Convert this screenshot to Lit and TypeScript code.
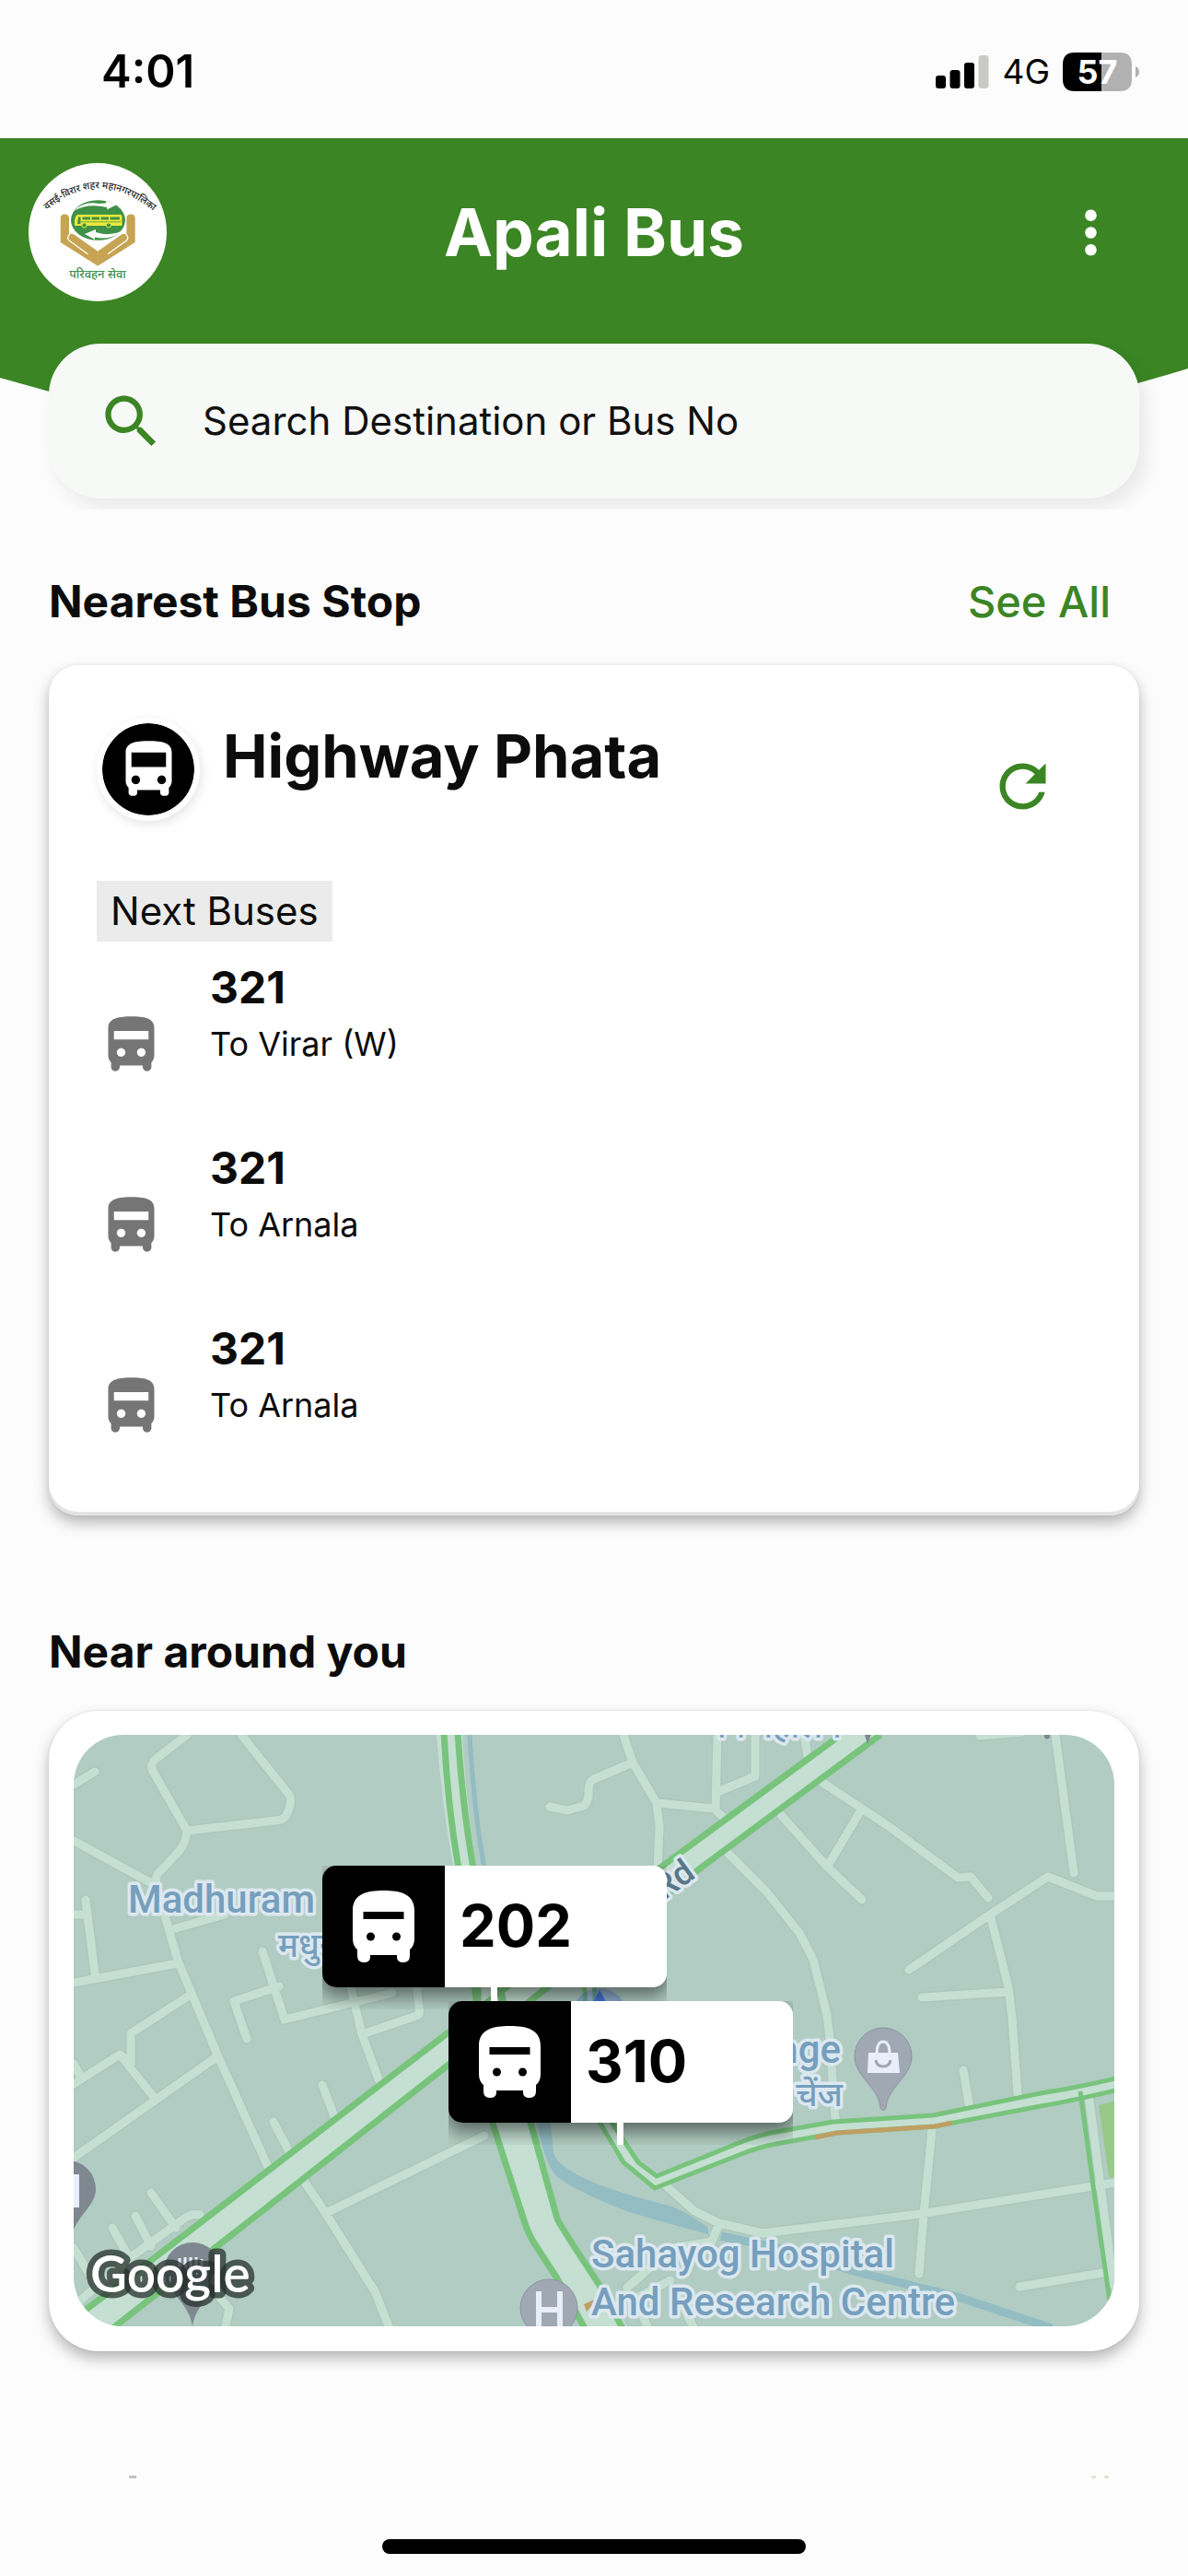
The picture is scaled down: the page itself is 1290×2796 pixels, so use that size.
import { LitElement, html, svg, css } from "lit";
import { customElement, property } from "lit/decorators.js";

const BUS_WIDE =
  "M4 16c0 .88.39 1.67 1 2.22V20c0 .55.45 1 1 1h1c.55 0 1-.45 1-1v-1h8v1c0 .55.45 1 1 1h1c.55 0 1-.45 1-1v-1.78c.61-.55 1-1.34 1-2.22V6c0-3.5-3.58-4-8-4s-8 .5-8 4v10zm3.5 1c-.83 0-1.5-.67-1.5-1.5S6.67 14 7.5 14s1.5.67 1.5 1.5S8.33 17 7.5 17zm9 0c-.83 0-1.5-.67-1.5-1.5s.67-1.5 1.5-1.5 1.5.67 1.5 1.5-.67 1.5-1.5 1.5zm1.5-6H6V6h12v5z";
const BUS_FILLED =
  "M12 2C8 2 4 2.5 4 6v9.5c0 .95.38 1.81 1 2.44v1.56c0 .83.67 1.5 1.5 1.5S8 20.33 8 19.5V19h8v.5c0 .82.67 1.5 1.5 1.5.82 0 1.5-.67 1.5-1.5v-1.56c.62-.63 1-1.49 1-2.44V6c0-3.5-3.58-4-8-4zM8.5 16c-.83 0-1.5-.67-1.5-1.5S7.67 13 8.5 13s1.5.67 1.5 1.5S9.33 16 8.5 16zm7 0c-.83 0-1.5-.67-1.5-1.5s.67-1.5 1.5-1.5 1.5.67 1.5 1.5-.67 1.5-1.5 1.5zm2.5-6H6V7h12v3z";
const SEARCH =
  "M15.5 14h-.79l-.28-.27C15.41 12.59 16 11.11 16 9.5 16 5.91 13.09 3 9.5 3S3 5.91 3 9.5 5.91 16 9.5 16c1.61 0 3.09-.59 4.23-1.57l.27.28v.79l5 4.99L20.49 19l-4.99-5zm-6 0C7.01 14 5 11.99 5 9.5S7.01 5 9.5 5 14 7.01 14 9.5 11.99 14 9.5 14z";
const REFRESH =
  "M17.65 6.35C16.2 4.9 14.21 4 12 4c-4.42 0-7.99 3.58-7.99 8s3.57 8 7.99 8c3.73 0 6.84-2.55 7.73-6h-2.08c-.82 2.33-3.04 4-5.65 4-3.31 0-6-2.69-6-6s2.69-6 6-6c1.66 0 3.14.69 4.22 1.78L13 11h7V4l-2.35 2.35z";
const MORE =
  "M12 8c1.1 0 2-.9 2-2s-.9-2-2-2-2 .9-2 2 .9 2 2 2zm0 2c-1.1 0-2 .9-2 2s.9 2 2 2 2-.9 2-2-.9-2-2-2zm0 6c-1.1 0-2 .9-2 2s.9 2 2 2 2-.9 2-2-.9-2-2-2z";

const icon = (d: string) =>
  html`<svg class="icon" viewBox="0 0 24 24" aria-hidden="true"><path fill="currentColor" d=${d}></path></svg>`;

@customElement("status-bar")
class StatusBar extends LitElement {
  static styles = css`
    :host { display: flex; align-items: center; justify-content: space-between; height: 150px; padding: 6px 52px 0 110px; box-sizing: border-box; color: #000; }
    .time { font-size: 49px; font-weight: 600; }
    .right { display: flex; align-items: center; gap: 14px; font-size: 37px; font-weight: 400; }
    .bars { width: 58px; height: 36px; }
    .battery { width: 84px; height: 42px; }
  `;
  render() {
    return html`
      <span class="time">4:01</span>
      <span class="right">
        <svg class="bars" viewBox="0 0 58 36" role="img" aria-label="Signal">
          <rect x="0" y="22" width="11" height="14" rx="3"></rect>
          <rect x="15.5" y="16" width="11" height="20" rx="3"></rect>
          <rect x="31" y="8" width="11" height="28" rx="3"></rect>
          <rect x="46.5" y="0" width="11" height="36" rx="3" fill="#c9cac8"></rect>
        </svg>
        <span>4G</span>
        <svg class="battery" viewBox="0 0 84 42" role="img" aria-label="Battery">
          <path fill="#b1b1b1" d="M42 0H62Q75 0 75 13V29Q75 42 62 42H42zM79 15q4 1.500 4 6t-4 6z"></path>
          <path d="M42 0H13Q0 0 0 13V29Q0 42 13 42H42z"></path>
          <text x="37.500" y="34" text-anchor="middle" font-size="36" font-weight="700" fill="#fff">57</text>
        </svg>
      </span>
    `;
  }
}

@customElement("transport-logo")
class TransportLogo extends LitElement {
  static styles = css`
    :host { display: block; width: 150px; height: 150px; }
    svg { display: block; width: 100%; height: 100%; }
    .hindi { font-family: "Noto Sans Devanagari", "Noto Sans", "Lohit Devanagari", "FreeSans", sans-serif; }
  `;
  render() {
    const hand = svg`
      <path fill="#c6a453" d="M34.700 60Q34.700 55.500 39.300 55.500Q44 55.500 44 60V77Q47 76 50 78L75.300 95.700V111.700L34.700 86z"></path>
      <path fill="none" stroke="#fff" stroke-width="1.300" stroke-linecap="round" d="M44.500 77.500Q41 81 44 84L64 98.500"></path>`;
    return html`
      <svg viewBox="0 0 150 150" role="img" aria-label="Parivahan Seva">
        <circle cx="75" cy="75" r="75" fill="#fff"></circle>
        <path id="arc" fill="none" d="M20 51Q75 4 134 51"></path>
        <text class="hindi" font-size="10.500" font-weight="500" fill="#222"><textPath href="#arc">वसई-विरार शहर महानगरपालिका</textPath></text>
        <ellipse cx="75.500" cy="62" rx="29.500" ry="21.800" fill="#3f9147"></ellipse>
        <path fill="#fff" d="M49 52Q60 41 76 44L84 43.500V41L96 45L85 50.500V48Q64 43 49 52z"></path>
        <path fill="#fff" d="M101 74Q90 84 72 80.500V83L61 77L73 72V75Q88 80 101 74z"></path>
        <path fill="#ece93c" d="M53 56H100Q101.500 56 101.500 58V68H50V62Q51 57 53 56z"></path>
        <path fill="#3f9147" d="M54 58.500H56.500V66H53zM58.500 58.500H67V61.500H58.500zM68.500 58.500H77V61.500H68.500zM78.500 58.500H87V61.500H78.500zM88.500 58.500H99V61.500H88.500zM57 63.500H100V64.300H57z"></path>
        <circle cx="60.500" cy="67.500" r="2.600" fill="#3f9147" stroke="#ece93c"></circle>
        <circle cx="87" cy="67.500" r="2.600" fill="#3f9147" stroke="#ece93c"></circle>
        ${hand}
        <g transform="translate(150.400 0) scale(-1 1)">${hand}</g>
        <text class="hindi" x="75" y="125" text-anchor="middle" font-size="13" font-weight="500" fill="#3f9150">परिवहन सेवा</text>
      </svg>
    `;
  }
}

@customElement("map-marker")
class MapMarker extends LitElement {
  @property() route = "";
  static styles = css`
    :host { display: block; width: 374px; padding-bottom: 24px; overflow: hidden; position: relative; }
    .plate { display: flex; align-items: center; height: 132px; border-radius: 15px; background: linear-gradient(90deg, #000 133px, #fff 133px); box-shadow: 0 8px 20px 2px rgba(0, 0, 0, 0.5); color: #000; font-size: 63px; font-weight: 700; }
    .bus { flex: none; width: 67px; height: 78px; margin: 0 49px 0 33px; }
    .stem { width: 7px; height: 24px; position: absolute; left: 183px; bottom: 0; background: #fff; }
  `;
  render() {
    return html`
      <div class="plate">
        <svg class="bus" viewBox="0 0 67 78" aria-hidden="true">
          <path fill="#fff" d="M33.500 0C16 0 0 3 0 22V52Q0 60 5 64V71Q5 78 12 78T19 72V70H48V72Q48 78 55 78T62 71V64Q67 60 67 52V22C67 3 51 0 33.500 0z"></path>
          <path fill="#000" d="M11.500 23H55.500V31H11.500z"></path>
          <circle cx="19.500" cy="50" r="4.500"></circle>
          <circle cx="47.500" cy="50" r="4.500"></circle>
        </svg>
        <span>${this.route}</span>
      </div>
      <span class="stem"></span>
    `;
  }
}

@customElement("nearby-map")
class NearbyMap extends LitElement {
  static styles = css`
    :host { display: block; height: 642px; position: relative; overflow: hidden; border-radius: 54px; background: #b1ccc2; }
    .canvas { display: block; width: 100%; height: 100%; }
    .road { fill: none; stroke: #c5dfd3; stroke-width: 9; stroke-linecap: round; stroke-linejoin: round; }
    .shade { fill: none; stroke: #acc8bd; stroke-width: 12; stroke-linecap: round; stroke-linejoin: round; }
    .traffic { fill: none; stroke: #78c47c; stroke-width: 7; stroke-linejoin: round; }
    .narrow { stroke-width: 5; }
    .label { font-family: Roboto, "Noto Sans Devanagari", "Noto Sans", sans-serif; font-size: 42px; font-weight: 500; fill: #769fbe; stroke: #dce8ef; stroke-width: 7; stroke-linejoin: round; paint-order: stroke; }
    .small { font-size: 36px; }
    .street { font-size: 37px; fill: #5a7789; }
    .google { font-family: Lato, sans-serif; font-size: 55px; font-weight: 600; fill: #fff; stroke: #26302c; stroke-opacity: 0.75; stroke-width: 13; stroke-linejoin: round; paint-order: stroke; }
    .first, .second { position: absolute; }
    .first { left: 270px; top: 142px; }
    .second { left: 407px; top: 289px; }
  `;
  render() {
    const roads =
      "M203 1883L167 1911Q162 1918 168 1926L203 1987Q202 2003 190 2014L173 2032Q168 2036 170 2048L193 2128L236 2230L291 2352" +
      "M297 2303L332 2370L354 2403L407 2487L424 2530M262 1883L314 1948Q318 1954 312 1968Q309 1976 299 1976L203 1987" +
      "M80 1937L103 1923M80 1998L170 2047M93 2062L103 2142M80 2078H93M80 2152L193 2131M191 2093L244 2078" +
      "M285 2118L309 2192L426 2163M303 2156L254 2172L268 2213M375 2135L381 2158L393 2208L411 2257M393 2208L452 2188Q457 2187 455 2180L452 2150" +
      "M350 2263L366 2305M80 2262L130 2230L166 2275M130 2230L142 2240V2207L207 2165M236 2232L80 2342M80 2240L87 2253" +
      "M122 2418L140 2450M147 2405L164 2438M164 2380L191 2418M217 2404Q208 2402 200 2408L142 2450L80 2503M244 2530L249 2506L232 2485M80 2440L110 2490" +
      "M354 2402L526 2318M1064 1884L1110 1880M1146 1883L1166 2033M987 2138L1075 2078L1138 2037L1191 2058H1211M1075 2078L1095 2157L1099 2190L1105 2273M1001 2168L1095 2162" +
      "M1046 2247L1052 2283M889 1932L936 1963L966 1983L1040 2038L1054 2037L1073 2060M936 1963L899 2025M848 1970L899 2027L936 2062" +
      "M791 2012L832 2053L868 2098L883 2127L898 2187L901 2213L907 2300M873 1883L877 1907M677 1883L687 1913L713 1957L716 1983L714 2030" +
      "M687 1913L645 1931Q639 1934 639 1944Q640 1954 634 1960L616 1965L597 1961M714 1957L775 1963L791 1978M779 1883L777 1963M820 1883V1928L779 1945" +
      "M724 2373L754 2400L781 2413L828 2424L999 2403L1187 2373L1211 2369M781 2413L773 2433L730 2440L681 2483M728 2475L690 2495L705 2530M735 2490L755 2530M1012 2312L1003 2403L998 2468M1197 2467L1107 2482M1183 2280L1209 2480";
    return html`
      <svg class="canvas" viewBox="80 1883 1130 642" preserveAspectRatio="xMidYMid slice" role="img" aria-label="Map of buses near you">
        <path class="shade" d=${roads}></path>
        <path fill="none" stroke="#93bcc3" stroke-width="5" d="M510 1883Q514 1960 526 2030"></path>
        <path fill="#93bcc3" d="M582 2295H597L601 2337Q606 2352 640 2367Q670 2380 730 2395Q750 2404 769 2418V2425Q720 2412 680 2400Q620 2376 603 2361Q588 2340 582 2295z"></path>
        <path fill="none" stroke="#93bcc3" stroke-width="9" d="M783 2427L850 2441L930 2466L1040 2493L1142 2527"></path>
        <path fill="#98c98b" d="M1193 2285L1211 2280V2363H1204z"></path>
        <path class="road" d=${roads}></path>
        <g fill="#c5dfd3">
          <path d="M80 2518L487 2205L717 2027L913 1881H958L764 2027L487 2242L126 2523L80 2560z"></path>
          <path d="M474 1883H502Q506 1960 518 2030L575 2300L607 2412L652 2482L681 2525H632L579 2433L535 2305L492 2025Q480 1960 474 1883z"></path>
          <path d="M634 2150L652 2305L677 2347L711 2376L805 2338L848 2326L909 2315L1015 2308L1130 2286L1211 2269V2257L1130 2272L1013 2296L905 2303L848 2313L807 2324L713 2362L693 2347L665 2305L645 2150z"></path>
        </g>
        <g class="traffic">
          <path d="M80 2517L162 2455L487 2206L717 2027L913 1883"></path>
          <path d="M120 2529L487 2241L764 2025L956 1883"></path>
          <path d="M482 1880Q486 1960 498 2028L535 2305L570 2413Q572 2420 579 2433L605 2473L636 2529"></path>
          <path d="M497 1880Q502 1960 514 2028L575 2300L605 2408Q607 2414 652 2482L677 2529"></path>
          <path class="narrow" d="M634 2140L640 2280L652 2305L677 2347L711 2375L805 2338Q825 2330 848 2326L909 2315L1015 2308L1130 2286Q1160 2281 1211 2269"></path>
          <path class="narrow" d="M645 2140L650 2280L665 2305L693 2347L713 2362L807 2324Q825 2317 848 2313L905 2303L1013 2296L1130 2272Q1170 2266 1211 2256"></path>
          <path class="narrow" d="M1173 2270L1189 2387L1205 2497"></path>
          <path class="narrow" d="M520 2150V2180M544 2150V2180M560 2185L600 2150"></path>
        </g>
        <path fill="none" stroke="#bf9f64" stroke-width="5" d="M885 2320L909 2315L1015 2308L1034 2304"></path>
        <path fill="#bf9f64" d="M634 2501L650 2494L637 2509z"></path>
        <circle cx="651" cy="2188" r="30" fill="#4a74dc" opacity="0.35"></circle>
        <path fill="#4672d8" d="M651 2160L662 2180H640z"></path>

        <g fill="#7f8791">
          <path d="M73 2345a31 31 0 0 1 31 31c0 16-16 26-24 44h-7z"></path>
          <path d="M209 2434a31 31 0 0 1 31 31c0 22-27 32-31 60c-4-28-31-38-31-60a31 31 0 0 1 31-31z"></path>
          <path d="M938 1880H947L942 1893zM1134 1880H1140V1886Q1137 1889 1134 1886z"></path>
        </g>
        <path fill="#e8effa" d="M80 2360H86V2396H80V2381H76V2374H80z"></path>
        <path fill="none" stroke="#e8effa" stroke-width="3" d="M195 2451V2460M201 2450V2466M207 2450V2468M213 2450V2462M219 2452V2460"></path>
        <g fill="#a0a8b4" stroke="#8b94a0" stroke-width="1">
          <path d="M959 2201a31 31 0 0 1 31 31c0 22-27 34-28 56q-3 5-6 0c-1-22-28-34-28-56a31 31 0 0 1 31-31z"></path>
          <circle cx="596" cy="2505" r="31"></circle>
        </g>
        <path fill="#e8effa" d="M943 2228H975L977 2250H942z"></path>
        <path fill="none" stroke="#e8effa" stroke-width="3" d="M952 2230Q952 2216 959 2216T966 2230"></path>
        <path fill="none" stroke="#a0a8b4" stroke-width="3" d="M951 2236Q952 2243 959 2243T967 2236"></path>
        <path fill="none" stroke="#e8effa" stroke-width="6" d="M585 2487V2525M608 2487V2525M585 2507H608"></path>

        <text class="label" x="139" y="2076">Madhuram</text>
        <text class="label small" x="302" y="2124">मधुर</text>
        <text class="label" x="913" y="2239" text-anchor="end">nge</text>
        <text class="label small" x="915" y="2286" text-anchor="end">चेंज</text>
        <text class="label small" x="768" y="1886">नन गहालन</text>
        <text class="label" x="642" y="2461">Sahayog Hospital</text>
        <text class="label" x="642" y="2513">And Research Centre</text>
        <text class="label street" transform="translate(721 2063) rotate(-36)">Rd</text>
        <text class="google" x="98" y="2488">Google</text>
      </svg>
      <map-marker class="first" route="202"></map-marker>
      <map-marker class="second" route="310"></map-marker>
    `;
  }
}

@customElement("app-root")
class AppRoot extends LitElement {
  static styles = css`
    :host { display: flex; flex-direction: column; min-height: 100vh; background: #fcfcfc; color: #0c0c0c; font-family: Inter, "Liberation Sans", sans-serif; line-height: 1.2; }
    button { border: 0; margin: 0; padding: 0; background: none; font: inherit; color: inherit; cursor: pointer; }
    h1, h2, h3, p, ul { margin: 0; padding: 0; }
    .icon { display: block; flex: none; width: 75px; height: 75px; }
    .hero { display: grid; overflow: hidden; }
    .backdrop { grid-area: 1 / 1; width: 100%; height: 360px; }
    .content { grid-area: 1 / 1; display: flex; flex-direction: column; gap: 46px; padding: 27px 0 12px; }
    .appbar { display: grid; grid-template-columns: 150px 1fr 150px; align-items: center; justify-items: center; padding: 0 31px; color: #fff; }
    .title { font-size: 71px; font-weight: 700; line-height: 84px; }
    .search { display: flex; align-items: center; gap: 40px; height: 168px; margin: 0 53px; padding: 0 52px; box-sizing: border-box; border-radius: 56px; background: #f7f9f6; color: #3b8524; box-shadow: 8px 10px 20px rgba(0, 0, 0, 0.08); }
    .field { flex: 1; min-width: 0; border: 0; padding: 0; outline: 0; background: none; font: inherit; font-size: 42px; color: #111; }
    .field::placeholder { color: #111; opacity: 1; }
    .heading { display: flex; justify-content: space-between; align-items: center; padding: 72px 84px 41px 53px; font-size: 47px; line-height: 56px; }
    .near { padding: 120px 84px 36px 53px; }
    .heading h2 { font-size: 48px; font-weight: 700; }
    .all { color: #3b8524; font-weight: 500; }
    .card { margin: 0 53px; background: #fff; box-shadow: 0 0 3px rgba(0, 0, 0, 0.08), 0 8px 16px rgba(0, 0, 0, 0.28); }
    .stop { border-radius: 32px; padding: 57px 52px 81px; box-shadow: inset 0 -4px 0 #e2e3e2, 0 0 4px rgba(0, 0, 0, 0.06), 0 8px 16px rgba(0, 0, 0, 0.28); }
    .stophead { display: flex; align-items: flex-start; }
    .badge { display: grid; place-items: center; flex: none; width: 100px; height: 100px; border: 6px solid #fff; border-radius: 50%; background: #000; background-clip: padding-box; color: #fff; box-shadow: 2px 4px 12px rgba(0, 0, 0, 0.1); }
    .stopname { flex: 1; margin-left: 25px; font-size: 65px; font-weight: 700; line-height: 84px; }
    .refresh { padding: 37px; color: #3b8524; }
    .tag { display: inline-block; margin-top: 28px; padding: 0 15px; background: #ebebeb; font-size: 42px; line-height: 66px; vertical-align: top; }
    .buses { display: grid; gap: 66px; padding-top: 20px; list-style: none; }
    .bus { display: flex; align-items: flex-end; gap: 48px; color: #757575; }
    .route { padding-bottom: 8px; color: #0c0c0c; }
    .number { font-size: 48px; font-weight: 700; line-height: 60px; }
    .towards { font-size: 36px; line-height: 62px; }
    .mapcard { border-radius: 54px; padding: 26px 27px 27px; }
    .peek { display: flex; gap: 9px; height: 3px; margin: 135px 86px 0 140px; }
    .speck { width: 5px; background: #dbe8d7; }
    .dark { width: 8px; margin-right: auto; background: #c4c4c4; }
    .home { width: 460px; height: 16px; margin: auto auto 24px; border-radius: 8px; background: #000; }
  `;

  private buses = [
    { number: "321", towards: "To Virar (W)" },
    { number: "321", towards: "To Arnala" },
    { number: "321", towards: "To Arnala" },
  ];

  render() {
    return html`
      <status-bar></status-bar>
      <header class="hero">
        <svg class="backdrop" viewBox="0 0 1290 360" preserveAspectRatio="none" aria-hidden="true">
          <path fill="#3b8524" d="M0 0H1290V250Q645 450 0 260z"></path>
        </svg>
        <div class="content">
          <div class="appbar">
            <transport-logo></transport-logo>
            <h1 class="title">Apali Bus</h1>
            <button aria-label="More options">${icon(MORE)}</button>
          </div>
          <label class="search">
            ${icon(SEARCH)}
            <input class="field" type="text" placeholder="Search Destination or Bus No" aria-label="Search Destination or Bus No" />
          </label>
        </div>
      </header>
      <section>
        <div class="heading">
          <h2>Nearest Bus Stop</h2>
          <button class="all">See All</button>
        </div>
        <article class="card stop">
          <div class="stophead">
            <span class="badge">${icon(BUS_WIDE)}</span>
            <h3 class="stopname">Highway Phata</h3>
            <button class="refresh" aria-label="Refresh">${icon(REFRESH)}</button>
          </div>
          <p class="tag">Next Buses</p>
          <ul class="buses">
            ${this.buses.map(
              (bus) => html`<li class="bus">
                ${icon(BUS_FILLED)}
                <div class="route">
                  <div class="number">${bus.number}</div>
                  <div class="towards">${bus.towards}</div>
                </div>
              </li>`
            )}
          </ul>
        </article>
      </section>
      <section>
        <div class="heading near"><h2>Near around you</h2></div>
        <div class="card mapcard"><nearby-map></nearby-map></div>
      </section>
      <div class="peek" aria-hidden="true">
        <span class="speck dark"></span><span class="speck"></span><span class="speck"></span>
      </div>
      <div class="home"></div>
    `;
  }
}
